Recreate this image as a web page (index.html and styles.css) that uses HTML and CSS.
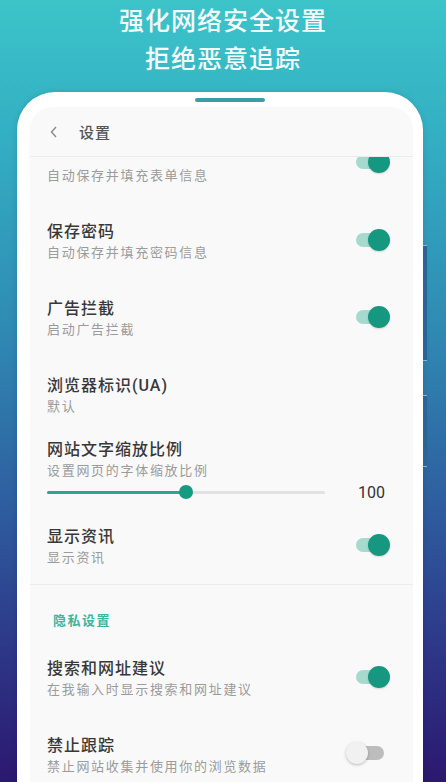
FILE: index.html
```
<!DOCTYPE html>
<html lang="zh-CN">
<head>
    <meta charset="UTF-8">
    <meta name="viewport" content="width=device-width, initial-scale=1.0">
    <title>浏览器设置</title>
    <link rel="stylesheet" href="styles.css">
</head>
<body>
    <!-- Headline -->
    <div class="headline">
        <p>强化网络安全设置</p>
        <p>拒绝恶意追踪</p>
    </div>

    <!-- Phone Frame -->
    <div class="phone">
        <span class="side-btn btn-a"></span>
        <span class="side-btn btn-b"></span>
        <div class="speaker"></div>

        <div class="screen">
            <!-- Top Bar -->
            <div class="topbar">
                <svg class="back" width="10" height="14" viewBox="0 0 10 14">
                    <path d="M7 2 L2.5 7 L7 12" fill="none" stroke="#8a8a8a" stroke-width="1.4"/>
                </svg>
                <span class="topbar-title">设置</span>
            </div>

            <!-- Settings List (scrolled, first row partly under the top bar) -->
            <div class="list">
                <div class="row first">
                    <div class="sub">自动保存并填充表单信息</div>
                    <span class="switch on"></span>
                </div>

                <div class="row">
                    <div class="text">
                        <div class="title">保存密码</div>
                        <div class="sub">自动保存并填充密码信息</div>
                    </div>
                    <span class="switch on"></span>
                </div>

                <div class="row">
                    <div class="text">
                        <div class="title">广告拦截</div>
                        <div class="sub">启动广告拦截</div>
                    </div>
                    <span class="switch on"></span>
                </div>

                <div class="row">
                    <div class="text">
                        <div class="title">浏览器标识(UA)</div>
                        <div class="sub">默认</div>
                    </div>
                </div>

                <div class="row slider-row">
                    <div class="title">网站文字缩放比例</div>
                    <div class="sub">设置网页的字体缩放比例</div>
                    <div class="slider">
                        <div class="track">
                            <div class="fill" style="width: 50%"></div>
                            <span class="knob" style="left: 50%"></span>
                        </div>
                        <span class="value">100</span>
                    </div>
                </div>

                <div class="row last">
                    <div class="text">
                        <div class="title">显示资讯</div>
                        <div class="sub">显示资讯</div>
                    </div>
                    <span class="switch on"></span>
                </div>

                <div class="section">隐私设置</div>

                <div class="row tall">
                    <div class="text">
                        <div class="title">搜索和网址建议</div>
                        <div class="sub">在我输入时显示搜索和网址建议</div>
                    </div>
                    <span class="switch on"></span>
                </div>

                <div class="row">
                    <div class="text">
                        <div class="title">禁止跟踪</div>
                        <div class="sub">禁止网站收集并使用你的浏览数据</div>
                    </div>
                    <span class="switch"></span>
                </div>
            </div>
        </div>
    </div>
</body>
</html>
```

FILE: styles.css
```
/* General Styling */
body {
    margin: 0;
    height: 782px;
    overflow: hidden;
    font-family: 'Roboto', 'Noto Sans CJK SC', sans-serif;
    background: linear-gradient(180deg, #3cc4c9 0%, #33aec3 18%, #2f8ab3 42%, #2e5b9e 66%, #2d3587 84%, #2c186f 100%);
    color: #333;
}

/* Headline */
.headline {
    padding-top: 3px;
    text-align: center;
    color: #f4fbfb;
}

.headline p {
    margin: 0;
    font-size: 25px;
    line-height: 38px;
    letter-spacing: 1px;
    font-weight: 500;
}

/* Phone Frame */
.phone {
    position: relative;
    margin: 13px 0 0 17px;
    width: 406px;
    height: 760px;
    box-sizing: border-box;
    padding: 6px 10px 0 13px;
    background: #fff;
    border-radius: 38px 38px 0 0;
    box-shadow: 0 0 6px rgba(0, 0, 0, 0.12);
}

.speaker {
    width: 70px;
    height: 4px;
    margin: 0 auto 5px;
    position: relative;
    left: 8px;
    border-radius: 2px;
    background: #3a9ea6;
}

.side-btn {
    position: absolute;
    right: -4px;
    width: 4px;
    background: #2b6496;
    border-top: 1px solid rgba(255, 255, 255, 0.5);
    border-bottom: 1px solid rgba(255, 255, 255, 0.5);
}

.btn-a { top: 153px; height: 114px; }
.btn-b { top: 303px; height: 70px; }

/* Screen */
.screen {
    height: 100%;
    background: #f9f9f9;
    border-radius: 22px 22px 0 0;
    overflow: hidden;
}

.topbar {
    display: flex;
    align-items: center;
    height: 49px;
    padding-left: 19px;
    border-bottom: 1px solid #ebebeb;
}

.back {
    margin-right: 20px;
}

.topbar-title {
    font-size: 15px;
    letter-spacing: 1px;
    font-weight: 500;
    color: #555;
}

/* Settings List */
.list {
    height: 640px;
    overflow: hidden;
}

.row {
    display: flex;
    align-items: center;
    justify-content: space-between;
    height: 77px;
    padding: 0 23px 0 17px;
}

.row.first {
    height: 46.5px;
    align-items: flex-start;
}

.row.first .sub {
    padding-top: 9px;
}

.row.first .switch {
    margin: -6px 0 0;
}

.row.last {
    height: 74px;
    border-bottom: 1px solid #ececec;
    margin-top: 1px;
}

.row.tall {
    height: 76px;
}

.title {
    font-size: 16px;
    line-height: 22px;
    letter-spacing: 1px;
    font-weight: 500;
    color: #383838;
}

.sub {
    font-size: 13px;
    line-height: 20px;
    letter-spacing: 1.7px;
    color: #9b9b9b;
}

/* Slider */
.row.slider-row {
    display: block;
    height: 74.5px;
    box-sizing: border-box;
    padding-top: 4.5px;
}

.slider {
    display: flex;
    align-items: center;
    height: 22px;
}

.track {
    position: relative;
    width: 278px;
    height: 3px;
    background: #e2e2e2;
    border-radius: 2px;
}

.fill {
    height: 100%;
    background: #2ea68f;
    border-radius: 2px;
}

.knob {
    position: absolute;
    top: 50%;
    width: 14px;
    height: 14px;
    margin: -7px 0 0 -7px;
    border-radius: 50%;
    background: #179a80;
}

.value {
    margin-left: 33px;
    font-size: 16px;
    color: #333;
}

/* Section Header */
.section {
    padding: 26px 0 10px 23px;
    font-size: 13px;
    line-height: 20px;
    letter-spacing: 1.5px;
    font-weight: 700;
    color: #3db59e;
}

/* Switch */
.switch {
    position: relative;
    flex: none;
    width: 44px;
    height: 22px;
    margin-bottom: 5px;
}

.switch::before {
    content: "";
    position: absolute;
    left: 6px;
    right: 6px;
    top: 4px;
    height: 14px;
    border-radius: 7px;
    background: #bdbdbd;
}

.switch::after {
    content: "";
    position: absolute;
    left: 0;
    top: 0;
    width: 22px;
    height: 22px;
    border-radius: 50%;
    background: #f1f1f1;
    box-shadow: 0 1px 3px rgba(0, 0, 0, 0.25);
}

.switch.on::before {
    left: 10px;
    background: #a6dacf;
}

.switch.on::after {
    left: auto;
    right: 0;
    background: #16977f;
    box-shadow: 0 1px 2px rgba(0, 0, 0, 0.15);
}
```
